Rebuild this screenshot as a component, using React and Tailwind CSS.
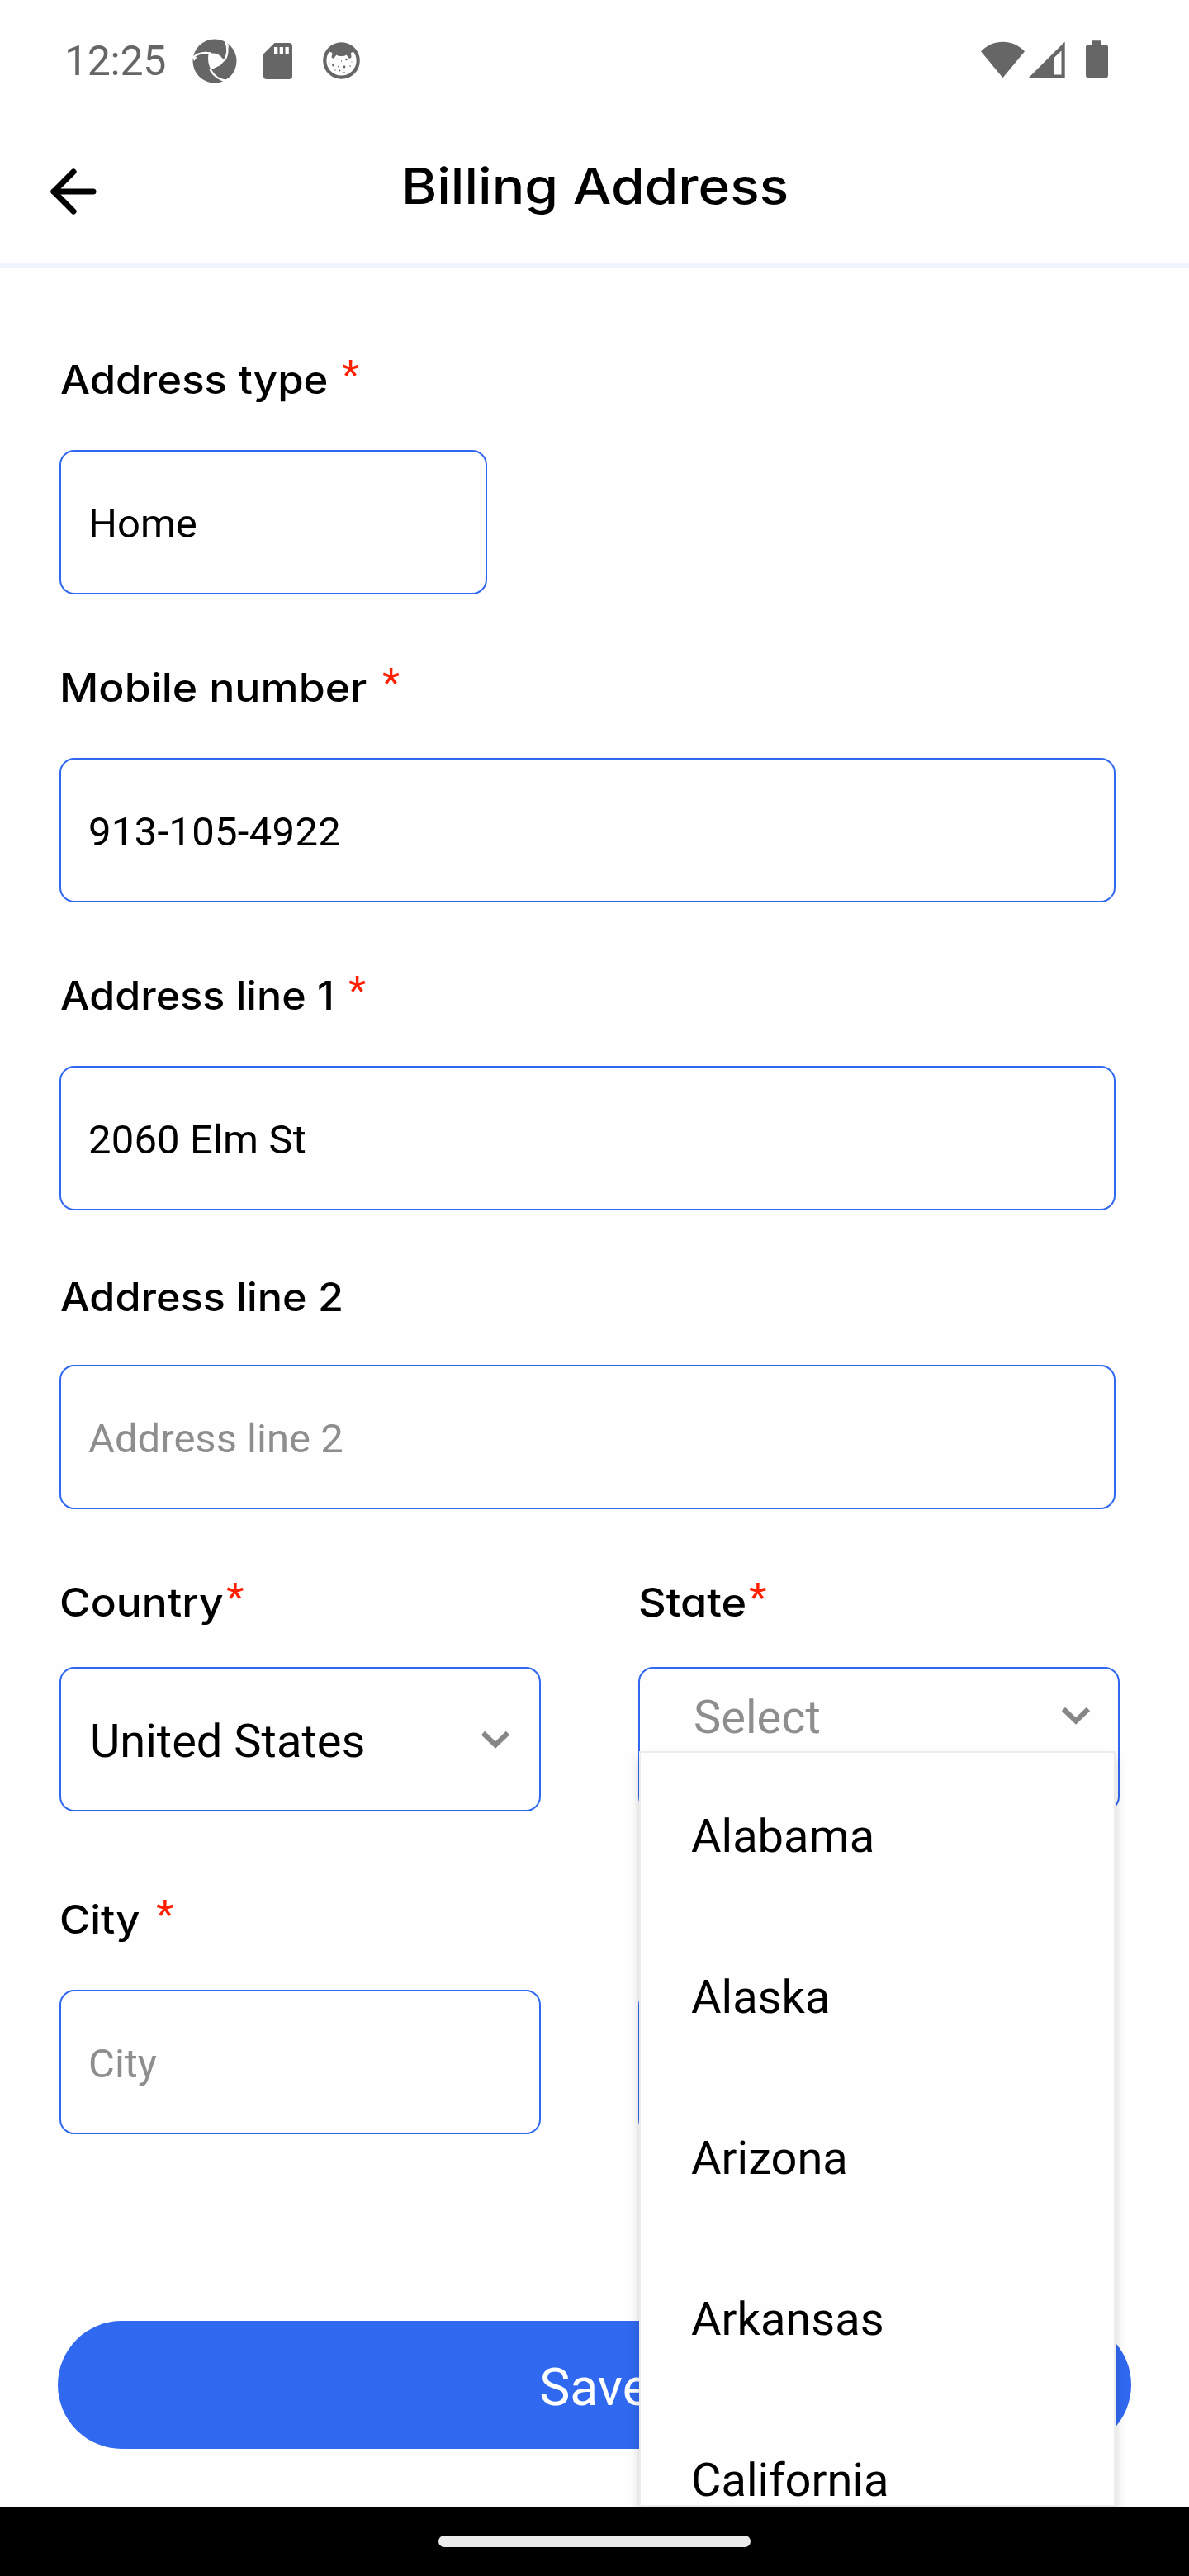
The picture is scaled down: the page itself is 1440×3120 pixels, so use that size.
import React from "react";
import { ArrowLeft } from "lucide-react";

const STATES = ["Alabama", "Alaska", "Arizona", "Arkansas", "California"];

function StatusBar() {
  return (
    <div className="flex h-[150px] shrink-0 items-start justify-between pr-[98px] pl-[78px] text-[#666666]">
      <div className="flex h-[147px] items-center">
        <span className="w-[155px] font-[Roboto] text-[50px] leading-none tracking-[-0.3px]">12:25</span>
        <svg className="h-[54px] w-[54px]" viewBox="0 0 54 54">
          <circle cx="27" cy="27" r="26.5" fill="currentColor" />
          <path d="M19.5 18.5C25 16.5 31 18 34.500 21.500L39 26.500L34 32L22.500 37.500C19 31 18.500 24 19.500 18.500Z" fill="#fff" />
          <path d="M.5 23C6 17.500 14 16 22 17.500M40.500 3.500C43.500 12 43.500 19 38.500 26.500M21.500 37C25 43.500 31 49.500 41 51" fill="none" stroke="#fff" strokeWidth="2.400" />
          <path d="M41 5.500L44 7L43.500 12Z M.5 22.500L2 27L6 22Z M36 52L43 48L44 51Z" fill="#fff" />
        </svg>
        <svg className="ml-[32px] h-[44px] w-[35px]" viewBox="0 0 35 44">
          <path d="M13.500 0H31a4 4 0 0 1 4 4V40a4 4 0 0 1-4 4H4a4 4 0 0 1-4-4V13.500Z" fill="currentColor" />
          <path d="M13 5h4.300v9H13zM19.700 5H24v9h-4.300zM26.500 5h4.300v9h-4.300z" fill="#fff" />
        </svg>
        <svg className="ml-[37px] h-[45px] w-[45px]" viewBox="0 0 45 45">
          <circle cx="22.500" cy="22.500" r="20.200" fill="#fff" stroke="currentColor" strokeWidth="4.200" />
          <path d="M6 11C12 1 33 1 39 11L34 13L34.500 18.500L32 20L28.500 15.500C26 17.500 19 17.500 16.500 15.500L13 20L10.500 18.500L11.500 13Z" fill="currentColor" />
          <g fill="currentColor">
            <circle cx="12.500" cy="28" r="1.400" />
            <circle cx="26" cy="30" r="1.400" />
            <circle cx="28.500" cy="21" r="1.300" />
            <circle cx="17" cy="20.500" r=".8" />
            <circle cx="22.500" cy="23" r=".7" />
            <circle cx="18.500" cy="29.500" r=".7" />
            <circle cx="20.500" cy="34.500" r=".9" />
            <circle cx="15" cy="34" r=".7" />
            <circle cx="33" cy="29" r=".8" />
            <circle cx="26" cy="36.500" r=".7" />
            <circle cx="35" cy="24" r=".6" />
            <circle cx="7.500" cy="25" r=".8" />
          </g>
        </svg>
      </div>
      <svg className="mt-[48px] h-[48px] w-[154px]" viewBox="0 0 154 48" fill="currentColor">
        <path d="M0 14.200C15 -1 38 -1 53 14.200L26.500 46.300Z" />
        <path fillRule="evenodd" d="M101.700 2.500V46.500H57.500ZM97.500 13.500L88 22.500V42.500H97.500Z" />
        <path d="M135 1.200h11v4.800h4.500a3.500 3.500 0 0 1 3.500 3.500V43a3.500 3.500 0 0 1-3.500 3.500h-20a3.500 3.500 0 0 1-3.500-3.500V9.500a3.500 3.500 0 0 1 3.500-3.500h4.500z" />
      </svg>
    </div>
  );
}

function Label({ text, stretch, star, className = "" }) {
  return (
    <div
      className={
        "flex h-[60px] font-[Inter] text-[47.5px] leading-[60px] font-medium whitespace-nowrap [font-feature-settings:'cv11'] " +
        className
      }
    >
      <span className={"origin-left " + stretch}>{text}</span>
      {star && (
        <span className={"-mt-[6px] font-[Roboto] text-[49px] leading-[60px] font-normal text-[#ff1f00] " + star}>*</span>
      )}
    </div>
  );
}

function Box({ children, className = "" }) {
  return (
    <div
      className={
        "flex h-[175px] items-center rounded-[18px] border-2 border-[#3069f0] pt-[3px] pl-[33px] font-[Roboto] text-[49px] leading-none " +
        className
      }
    >
      {children}
    </div>
  );
}

function Chevron({ className = "" }) {
  return (
    <svg className={"h-[22px] w-[36px] " + className} viewBox="0 0 36 22">
      <path d="M3 3L18 17.500L33 3" fill="none" stroke="#868686" strokeWidth="6.200" />
    </svg>
  );
}

export default function App() {
  return (
    <div className="relative flex h-[3120px] w-[1440px] flex-col overflow-hidden bg-[#fefefe] text-black">
      <StatusBar />

      <header className="flex h-[174px] shrink-0 border-b-[5px] border-[#f0f4ff]">
        <ArrowLeft className="mt-[41px] ml-[48px] h-[82px] w-[82px]" strokeWidth={2.1} />
        <h1 className="mt-[35px] ml-[356px] origin-left scale-x-[1.089] font-[Inter] text-[60.5px] leading-[80px] font-medium whitespace-nowrap">
          Billing Address
        </h1>
      </header>

      <main className="flex grow flex-col pt-[106px] pl-[72px]">
        <Label text="Address type" stretch="scale-x-[1.071]" star="ml-[38px]" className="pl-px" />
        <Box className="mt-[55px] w-[518px]">Home</Box>

        <Label text="Mobile number" stretch="scale-x-[1.092]" star="ml-[50px]" className="mt-[83px]" />
        <Box className="mt-[55px] w-[1279px] tracking-[0.3px]">913-105-4922</Box>

        <Label text="Address line 1" stretch="scale-x-[1.057]" star="ml-[35px]" className="mt-[83px] pl-px" />
        <Box className="mt-[55px] w-[1279px] tracking-[0.15px]">2060 Elm St</Box>

        <Label text="Address line 2" stretch="scale-x-[1.06]" className="mt-[75px] pl-px" />
        <Box className="mt-[52px] w-[1279px] text-[#8e8e8e]">Address line 2</Box>

        <div className="mt-[83px] flex gap-[118px]">
          <div className="w-[583px]">
            <Label text="Country" stretch="scale-x-[1.083]" star="ml-[19px]" />
            <Box className="mt-[48px] justify-between pr-[35px] text-[56px]">
              <span className="pt-[2px] pl-[2px]">United States</span>
              <Chevron className="-mt-[3px]" />
            </Box>
          </div>
          <div className="relative w-[583px]">
            <Label text="State" stretch="scale-x-[1.1]" star="ml-[15px]" />
            <Box className="mt-[48px] items-start justify-between pr-[33px] text-[56px] text-[#8e8e8e]">
              <span className="pt-[28px] pl-[32px]">Select</span>
              <Chevron className="mt-[43px]" />
            </Box>
            <ul className="absolute top-[210px] left-[1px] z-10 h-[915px] w-[577px] overflow-hidden border-2 border-[#ececec] bg-[#fefefe] pt-[3px] pl-[61px] font-[Roboto] text-[56px] shadow-[0_9px_12px_rgba(0,0,0,0.2)]">
              {STATES.map((name) => (
                <li key={name} className="flex h-[195px] items-center leading-none">
                  {name}
                </li>
              ))}
            </ul>
          </div>
        </div>

        <div className="mt-[101px] flex gap-[118px]">
          <div className="w-[583px]">
            <Label text="City" stretch="scale-x-[1.069]" star="ml-[26px]" />
            <Box className="mt-[55px] text-[#8e8e8e]">City</Box>
          </div>
          <div className="w-[577px] pt-[115px]">
            <Box />
          </div>
        </div>

        <button className="mt-[226px] -ml-[2px] flex h-[155px] w-[1300px] shrink-0 items-center justify-center rounded-full bg-[#3069f0] pt-[7px] font-[Roboto] text-[62.5px] leading-none text-white">
          Save
        </button>
      </main>

      <footer className="z-20 flex h-[84px] shrink-0 items-start justify-center bg-black pt-[35px]">
        <div className="h-[14px] w-[378px] rounded-full bg-[#ebebeb]" />
      </footer>
    </div>
  );
}
